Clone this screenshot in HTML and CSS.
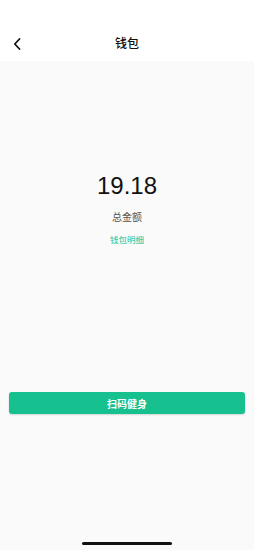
FILE: index.html
```html
<!DOCTYPE html>
<html lang="zh-CN">
<head>
    <meta charset="UTF-8" />
    <meta name="viewport" content="width=device-width, initial-scale=1.0" />
    <title>钱包</title>
    <link rel="stylesheet" href="styles.css">
</head>

<body>
    <div class="page">
        <!-- Top bar -->
        <div class="topbar">
            <div class="back">
                <svg width="8" height="12" viewBox="0 0 8 12">
                    <path d="M6.5 1 L1.8 6 L6.5 11" fill="none" stroke="#111" stroke-width="1.8" stroke-linecap="round" stroke-linejoin="round" />
                </svg>
            </div>
            <div class="title">钱包</div>
        </div>

        <div class="content">
            <div class="balance">
                <div class="amount">19.18</div>
                <div class="label">总金额</div>
                <div class="detail-link">钱包明细</div>
            </div>

            <button class="scan-btn">扫码健身</button>
        </div>

        <div class="home-bar"></div>
    </div>
</body>
</html>
```

FILE: styles.css
```css
body {
    margin: 0;
    font-family: "Noto Sans CJK SC", "Noto Sans", sans-serif;
    background: #fafafa;
}

.page {
    height: 550px;
    display: flex;
    flex-direction: column;
}

.topbar {
    height: 61px;
    background: #ffffff;
    display: flex;
    align-items: flex-end;
    justify-content: center;
    position: relative;
    padding-bottom: 10px;
    box-sizing: border-box;
}

.back {
    position: absolute;
    left: 13px;
    bottom: 11px;
    height: 12px;
}

    .back svg {
        display: block;
    }

.title {
    font-size: 12px;
    font-weight: 500;
    color: #111;
    line-height: 17px;
}

.content {
    flex: 1;
    display: flex;
    flex-direction: column;
    padding: 0 9px;
}

.balance {
    display: flex;
    flex-direction: column;
    align-items: center;
    padding-top: 111px;
}

.amount {
    font-family: "Liberation Sans", sans-serif;
    font-size: 24px;
    line-height: 28px;
    color: #111;
}

.label {
    margin-top: 10px;
    font-size: 10px;
    line-height: 14px;
    color: #555;
}

.detail-link {
    margin-top: 9px;
    font-size: 8.5px;
    line-height: 12px;
    color: #22c08f;
}

.scan-btn {
    margin-top: 147px;
    height: 22px;
    border: none;
    border-radius: 3px;
    background: #17c18f;
    color: #ffffff;
    font-family: "Noto Sans CJK SC", sans-serif;
    font-size: 10px;
    font-weight: bold;
    box-shadow: 0 1px 2px rgba(0, 0, 0, 0.15);
}

.home-bar {
    width: 90px;
    height: 3px;
    border-radius: 2px;
    background: #111;
    align-self: center;
    margin-bottom: 5px;
}
```
